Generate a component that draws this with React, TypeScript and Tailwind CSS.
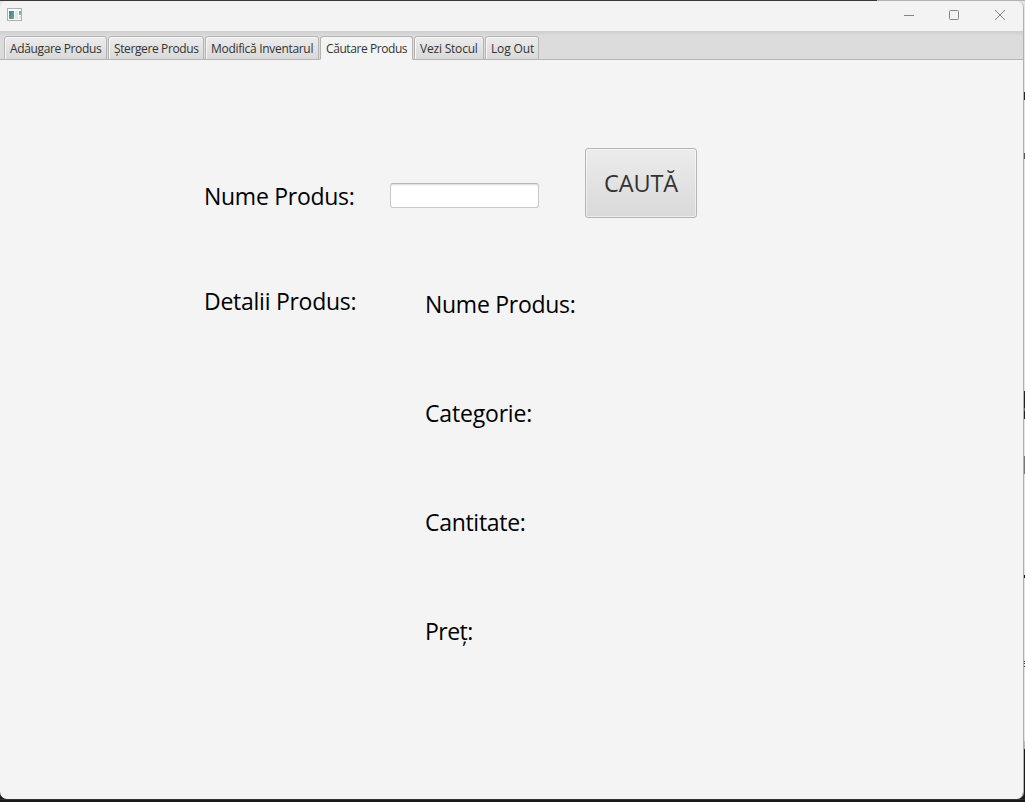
import type { ReactNode } from "react";

const tabs = [
  { label: "Adăugare Produs", box: "w-[103px]", text: "tracking-[-0.36px]" },
  { label: "Ștergere Produs", box: "w-[96px]", text: "tracking-[-0.38px]" },
  { label: "Modifică Inventarul", box: "w-[114px]", text: "tracking-[-0.31px]" },
  { label: "Căutare Produs", box: "w-[93px]", text: "tracking-[-0.42px]", active: true },
  { label: "Vezi Stocul", box: "w-[70px]", text: "tracking-[-0.2px]" },
  { label: "Log Out", box: "w-[54px]", text: "tracking-[-0.15px]" },
];

const details = [
  { label: "Nume Produs:", spacing: "tracking-[-0.28px]" },
  { label: "Categorie:", spacing: "tracking-[-0.18px]" },
  { label: "Cantitate:", spacing: "tracking-[-0.3px]" },
  { label: "Preț:", spacing: "tracking-[-0.55px]" },
];

function Label({ children, className = "" }: { children: ReactNode; className?: string }) {
  return <span className={`block whitespace-nowrap text-[23px] leading-8 text-black ${className}`}>{children}</span>;
}

function TitleBar() {
  return (
    <header className="flex h-[30px] shrink-0 items-start justify-between bg-[#f3f3f3]">
      <svg className="ml-[7px] mt-[7px]" width="16" height="14" viewBox="0 0 16 14">
        <defs>
          <linearGradient id="pane" x1="0" y1="0" x2="1" y2="1">
            <stop offset="0" stopColor="#477ba0" />
            <stop offset="1" stopColor="#62b183" />
          </linearGradient>
        </defs>
        <rect x="0.5" y="0.5" width="14" height="12" fill="#fff" stroke="#a9b0b6" />
        <rect x="2" y="3" width="5" height="8" fill="url(#pane)" />
        <rect x="8" y="3" width="3" height="8" fill="#e6e6e8" />
        <rect x="12" y="3" width="2" height="4" fill="url(#pane)" opacity="0.75" />
        <rect x="12" y="8" width="2" height="3" fill="#e6e6e8" />
      </svg>
      <div className="mr-[18px] mt-[8px] flex gap-[35px] text-[#858585]">
        <svg width="11" height="12" viewBox="0 0 11 12" fill="none" stroke="currentColor">
          <path d="M1 6.5h10" />
        </svg>
        <svg width="10" height="12" viewBox="0 0 10 12" fill="none" stroke="currentColor">
          <rect x="0.5" y="1.5" width="9" height="9" rx="1" />
        </svg>
        <svg width="11" height="12" viewBox="0 0 11 12" fill="none" stroke="currentColor">
          <path d="M1 1l10 10M11 1l-10 10" />
        </svg>
      </div>
    </header>
  );
}

function TabBar() {
  return (
    <nav className="flex h-[29px] shrink-0 items-end gap-px bg-[linear-gradient(#cecece,#dcdcdc_5px)] pl-[4px] shadow-[inset_0_-1px_0_#b4b4b4]">
      {tabs.map((t) => (
        <button
          key={t.label}
          className={`flex h-[24px] items-start whitespace-nowrap rounded-t-[3px] border border-[#b4b4b4] pl-[5px] pt-[3px] text-[12px] leading-[17px] text-[#333] ${t.box} ${
            t.active ? "border-b-[#f4f4f4] bg-[#f4f4f4]" : "bg-[linear-gradient(#ececec,#d9d9d9)] shadow-[inset_1px_1px_0_#f8f8f8]"
          }`}
        >
          <span className={t.text}>{t.label}</span>
        </button>
      ))}
    </nav>
  );
}

function SearchPanel() {
  return (
    <main className="grow bg-[#f4f4f4] pl-[204px] pt-[88px]">
      <div className="flex h-[70px]">
        <Label className="mt-[32px] w-[186px] tracking-[-0.28px]">Nume Produs:</Label>
        <input className="mt-[35px] h-[25px] w-[149px] rounded-[3px] border border-[#c8c8c8] border-t-[#b6b6b6] bg-white px-2 text-xs shadow-[inset_0_2px_2px_-1px_#d8d8d8] outline-none" />
        <button className="ml-[46px] h-[70px] w-[112px] rounded-[3px] border border-[#b5b5b5] bg-[linear-gradient(#ececec,#d9d9d9)] text-[23.5px] leading-8 tracking-[-0.1px] text-[#333] shadow-[inset_0_0_0_1px_#ffffff80]">
          CAUTĂ
        </button>
      </div>
      <div className="flex pt-[67px]">
        <Label className="w-[221px] tracking-[-0.26px]">Detalii Produs:</Label>
        <div className="flex flex-col gap-[77px] pt-[3px]">
          {details.map((d) => (
            <Label key={d.label} className={d.spacing}>
              {d.label}
            </Label>
          ))}
        </div>
      </div>
    </main>
  );
}

function DesktopEdge() {
  return (
    <div className="flex w-px shrink-0 flex-col">
      <i className="h-[91px] bg-[#e4e4e4]" />
      <i className="h-[8px] bg-[#222]" />
      <i className="h-[53px] bg-[#e4e4e4]" />
      <i className="h-[6px] bg-[#555]" />
      <i className="h-[232px] bg-[#e4e4e4]" />
      <i className="h-[17px] bg-[#222]" />
      <i className="h-[3px] bg-[#3578ad]" />
      <i className="h-[8px] bg-[#222]" />
      <i className="h-[37px] bg-[#e4e4e4]" />
      <i className="h-[18px] bg-[#777]" />
      <i className="h-[101px] bg-[#e4e4e4]" />
      <i className="h-[3px] bg-[#111]" />
      <i className="h-[83px] bg-[#e4e4e4]" />
      <i className="h-px bg-[#333]" />
      <i className="h-px bg-[#e4e4e4]" />
      <i className="h-px bg-[#333]" />
      <i className="h-[2px] bg-[#e4e4e4]" />
      <i className="h-px bg-[#333]" />
      <i className="h-[74px] bg-[#e4e4e4]" />
      <i className="h-[8px] bg-[#b8b8b8]" />
      <i className="grow bg-[#1b1b1b]" />
    </div>
  );
}

export default function App() {
  return (
    <div className="flex h-[802px] w-[1025px] flex-col overflow-hidden bg-[#1a1819] font-['Open_Sans',sans-serif]">
      <div className="flex h-px shrink-0">
        <i className="w-[877px] bg-[#3a3536]" />
        <i className="grow bg-[#b4b4b4]" />
      </div>
      <div className="flex h-[798px] shrink-0 bg-[linear-gradient(#e4e4e4_50%,#1b1b1b_50%)]">
        <div className="flex w-[1024px] flex-col overflow-hidden rounded-[7px] border-r border-[#b0b0b0]">
          <TitleBar />
          <TabBar />
          <SearchPanel />
        </div>
        <DesktopEdge />
      </div>
      <div className="h-px shrink-0 bg-[#333]" />
    </div>
  );
}
